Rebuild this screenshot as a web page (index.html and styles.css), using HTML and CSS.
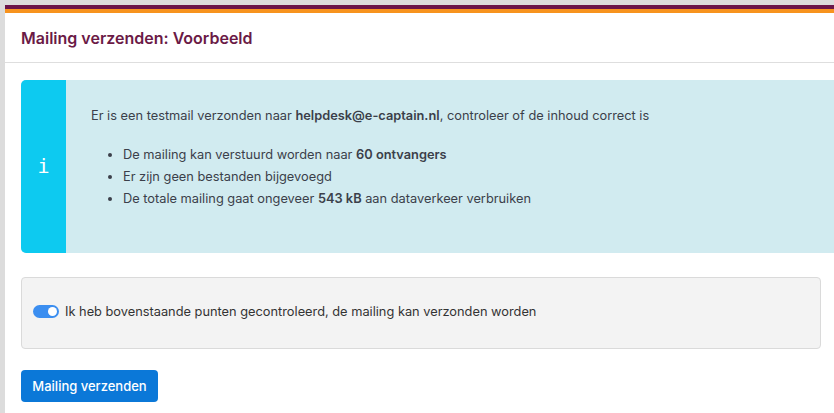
FILE: index.html
```html
<!DOCTYPE html>
<html>
<head>
    <title>Mailing verzenden</title>
    <link rel="stylesheet" href="styles.css">
</head>
<body>
    <div class="card">
        <div class="card-header">
            <h2>Mailing verzenden: Voorbeeld</h2>
        </div>
        <div class="card-body">
            <div class="alert">
                <div class="alert-icon">i</div>
                <div class="alert-text">
                    <p>Er is een testmail verzonden naar <b>helpdesk@e-captain.nl</b>, controleer of de inhoud correct is</p>
                    <ul>
                        <li>De mailing kan verstuurd worden naar <b>60 ontvangers</b></li>
                        <li>Er zijn geen bestanden bijgevoegd</li>
                        <li>De totale mailing gaat ongeveer <b>543 kB</b> aan dataverkeer verbruiken</li>
                    </ul>
                </div>
            </div>

            <div class="check-panel">
                <label class="switch-row">
                    <span class="switch"><span class="knob"></span></span>
                    Ik heb bovenstaande punten gecontroleerd, de mailing kan verzonden worden
                </label>
            </div>

            <button type="button" class="btn">Mailing verzenden</button>
        </div>
    </div>
</body>
</html>
```

FILE: styles.css
```css
body {
    margin: 0;
    padding: 5px 0 0 5px;
    background: #dcdcdc;
    font-family: Inter, "Noto Sans", sans-serif;
    font-size: 12.8px;
    color: #3b3f4a;
    overflow: hidden;
    height: 413px;
    box-sizing: border-box;
}

.card {
    min-height: 420px;
    background: #fff;
    border-top: 4px solid #6b1549;
}

.card-header {
    border-top: 4px solid #f7931e;
    border-bottom: 1px solid #dedede;
    height: 49px;
    padding: 0 16px;
    display: flex;
    align-items: center;
}

.card-header h2 {
    margin: 0;
    font-size: 16px;
    font-weight: 600;
    color: #6b1a46;
    padding-top: 1px;
}

.card-body {
    padding: 17px 0 0 16px;
}

.alert {
    display: flex;
    height: 173px;
    background: #d1ebf0;
    border-radius: 5px 0 0 5px;
    overflow: hidden;
}

.alert-icon {
    width: 45px;
    flex: none;
    background: #0dcaf0;
    color: #fff;
    display: flex;
    align-items: center;
    justify-content: center;
    font-family: "DejaVu Sans Mono", monospace;
    font-size: 20px;
    padding-bottom: 1px;
}

.alert-text {
    padding: 27px 25px 0 25px;
}

.alert-text p {
    margin: 0 0 19px 0;
    line-height: 18px;
}

.alert-text ul {
    margin: 0;
    padding-left: 32px;
}

.alert-text li {
    line-height: 22px;
}

.alert-text b {
    font-weight: 600;
}

.check-panel {
    box-sizing: border-box;
    margin-top: 24px;
    width: 800px;
    height: 72px;
    background: #f3f3f3;
    border: 1px solid #dadada;
    border-radius: 4px;
    display: flex;
    align-items: center;
    padding: 0 0 4px 11px;
}

.switch-row {
    display: flex;
    align-items: center;
    gap: 6px;
    color: #333;
}

.switch {
    width: 26px;
    height: 13px;
    border-radius: 7px;
    background: #3b8ef0;
    position: relative;
}

.knob {
    position: absolute;
    right: 2px;
    top: 2px;
    width: 9px;
    height: 9px;
    border-radius: 50%;
    background: #fff;
}

.btn {
    margin-top: 21px;
    background: #0b78d8;
    color: #fff;
    border: none;
    border-radius: 4px;
    height: 32px;
    width: 137px;
    font-family: Inter, "Noto Sans", sans-serif;
    font-size: 13px;
    font-weight: 500;
    cursor: pointer;
}
```
